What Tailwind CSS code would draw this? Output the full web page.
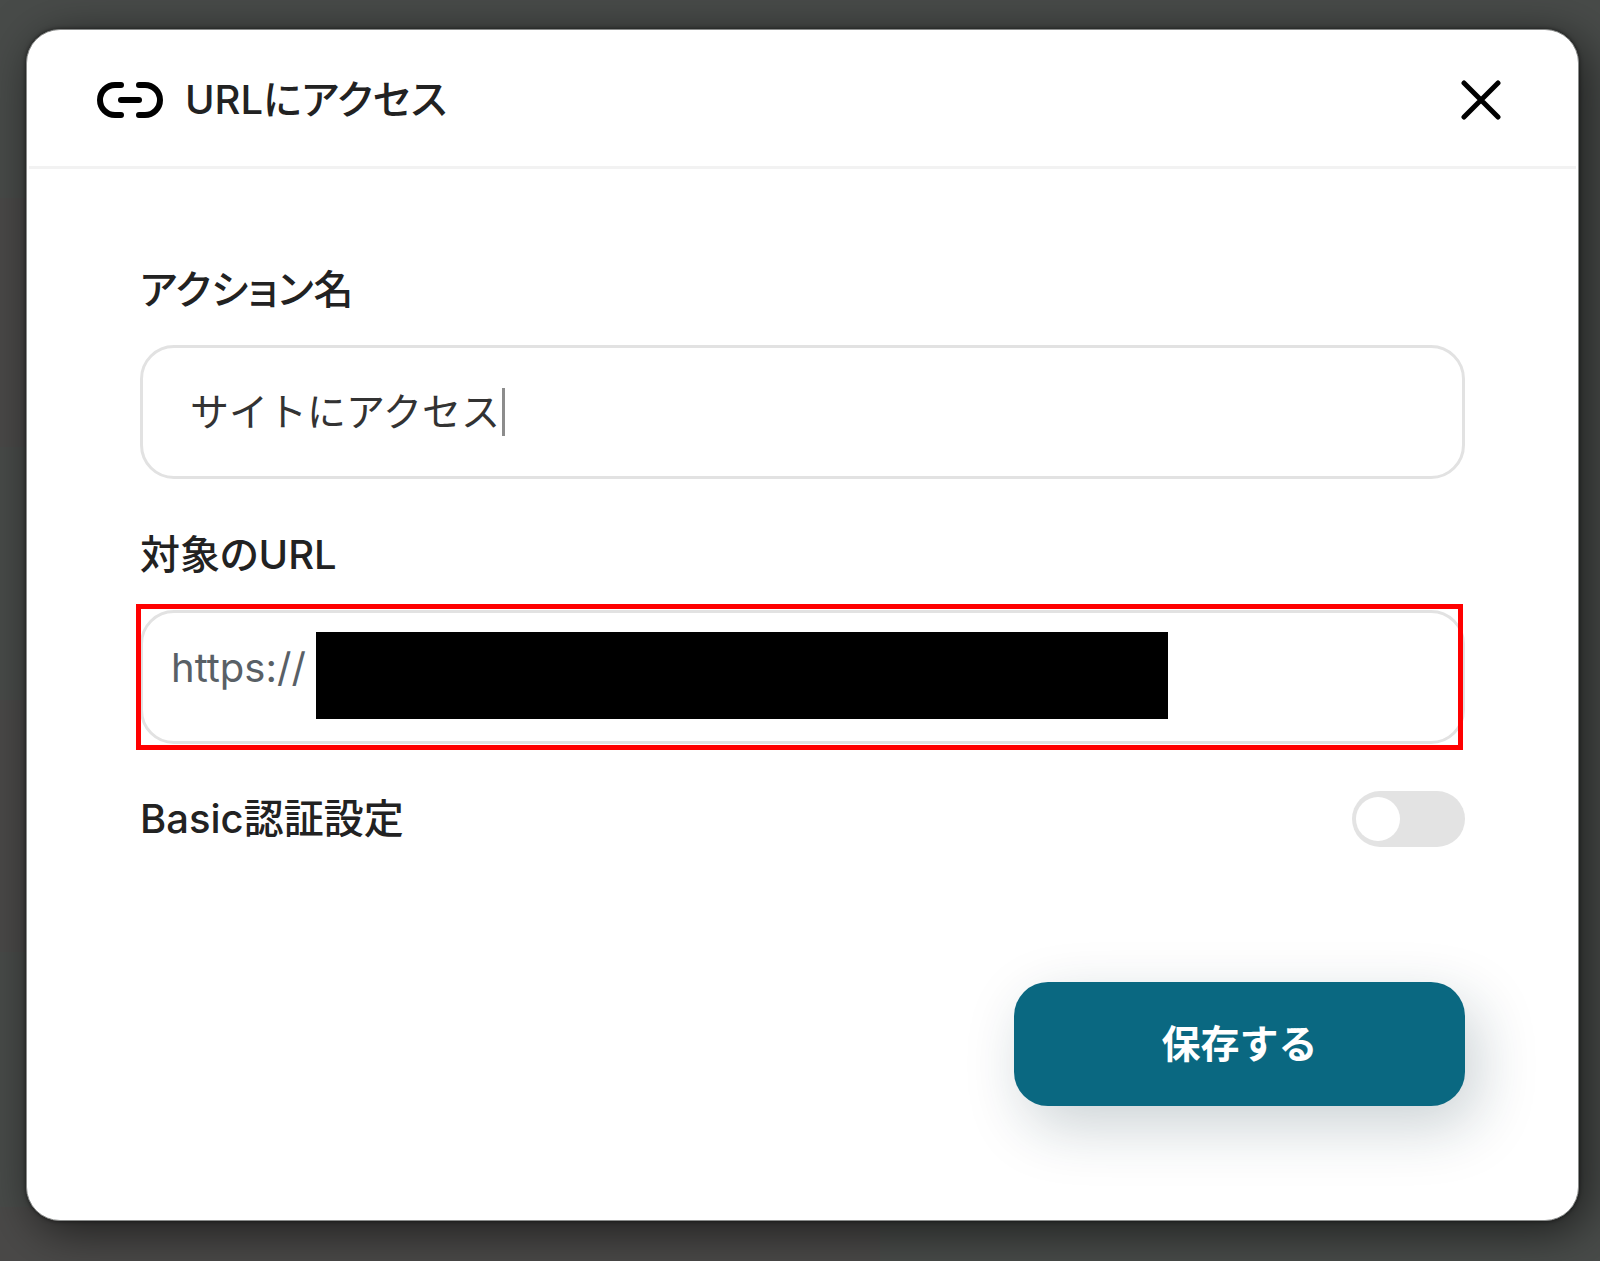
<!DOCTYPE html>
<html lang="ja">
<head>
  <meta charset="UTF-8">
  <meta name="viewport" content="width=device-width, initial-scale=1.0">
  <title>URLにアクセス</title>
  <script src="https://cdn.jsdelivr.net/npm/@tailwindcss/browser@4"></script>
</head>
<body class="relative min-h-screen bg-[#484b49] pt-[29px] pb-10 pl-[26px] pr-[21px] font-[Inter,'Noto_Sans_CJK_JP',sans-serif] text-[40px] leading-[56px] text-[#222222] overflow-x-hidden">

  <!-- Sfondo oscurato -->
  <div class="absolute inset-0 flex flex-col" aria-hidden="true">
    <div class="h-[198px]"></div>
    <div class="h-[249px] w-[55%] bg-[#4a4948]"></div>
    <div class="h-[253px]"></div>
    <div class="h-[252px] w-[55%] bg-[#4a4948]"></div>
    <div class="h-[255px]"></div>
    <div class="grow w-[55%] bg-[#4a4948]"></div>
  </div>

  <!-- Modale -->
  <div role="dialog" aria-modal="true" aria-labelledby="modalTitle" class="relative bg-white rounded-[34px] border border-[#8a8c8b] shadow-[0_0_4px_rgba(0,0,0,0.6),8px_10px_48px_rgba(0,0,0,0.6)]">
    <header class="px-[2px]">
      <div class="flex items-center justify-between border-b-3 border-[#f2f2f2] h-[139px] pt-[3px] pl-[68px] pr-[75px]">
        <div class="flex items-center gap-[22px]">
          <svg class="w-[66px] h-[36px]" viewBox="0 0 66 36" fill="none" stroke="#000" stroke-width="6" stroke-linecap="round" aria-hidden="true">
            <path d="M24 3h-6a15 15 0 0 0 0 30h6"></path>
            <path d="M42 3h6a15 15 0 0 1 0 30h-6"></path>
            <path d="M24 18h18"></path>
          </svg>
          <h2 id="modalTitle" class="font-medium [font-feature-settings:'palt']">URLにアクセス</h2>
        </div>
        <button type="button" id="closeButton" aria-label="閉じる" class="cursor-pointer">
          <svg class="w-10 h-10" viewBox="0 0 40 40" fill="none" stroke="#000" stroke-width="5" stroke-linecap="round">
            <path d="M3 3l34 34M37 3L3 37"></path>
          </svg>
        </button>
      </div>
    </header>

    <form id="actionForm" class="pt-[93px] pb-[114px] px-[113px]">
      <!-- Nome azione -->
      <label for="actionName" class="block font-medium [font-feature-settings:'palt']">アクション名</label>
      <div class="relative mt-[27px]">
        <input type="text" id="actionName" value="サイトにアクセス" class="block w-full h-[134px] border-3 border-[#e2e2e2] rounded-[34px] px-[47px] pb-[6px] text-[39px] text-[#333333] outline-none caret-transparent">
        <span class="absolute left-[362px] top-[43px] w-[3px] h-[48px] bg-[#8c8c8c]" aria-hidden="true"></span>
      </div>

      <!-- URL -->
      <label for="targetUrl" class="block font-medium [font-feature-settings:'palt'] mt-[48px]">対象のURL</label>
      <div class="relative mt-[27px]">
        <input type="url" id="targetUrl" value="https://" class="block w-full h-[134px] border-3 border-[#e2e2e2] rounded-[34px] pl-[28px] pr-8 pb-5 text-[#596066] outline-none">
        <span class="absolute left-[176px] right-[297px] top-[22px] h-[87px] bg-black" aria-hidden="true"></span>
        <span class="absolute -left-1 right-[2px] -top-[6px] -bottom-[6px] border-5 border-[#ff0000] pointer-events-none" aria-hidden="true"></span>
      </div>

      <!-- Autenticazione Basic -->
      <div class="flex items-center justify-between mt-[47px]">
        <label for="basicAuth" class="font-medium">Basic認証設定</label>
        <input type="checkbox" role="switch" id="basicAuth" class="appearance-none w-[113px] h-[56px] rounded-full bg-[#e3e3e3] p-1 cursor-pointer before:block before:w-[44px] before:h-[44px] before:mt-[2px] before:rounded-full before:bg-white checked:bg-[#0a6881] checked:before:ml-[60px]">
      </div>

      <div class="flex justify-end mt-[135px]">
        <button type="submit" class="w-[451px] h-[124px] rounded-[34px] bg-[#0a6881] text-[39px] text-white font-bold cursor-pointer shadow-[12px_20px_60px_rgba(20,50,65,0.22)]">保存する</button>
      </div>
    </form>
  </div>

  <script>
    document.getElementById('closeButton').addEventListener('click', () => {
      document.querySelector('[role="dialog"]').hidden = true;
    });

    document.getElementById('actionForm').addEventListener('submit', (event) => {
      event.preventDefault();
    });
  </script>
</body>
</html>
